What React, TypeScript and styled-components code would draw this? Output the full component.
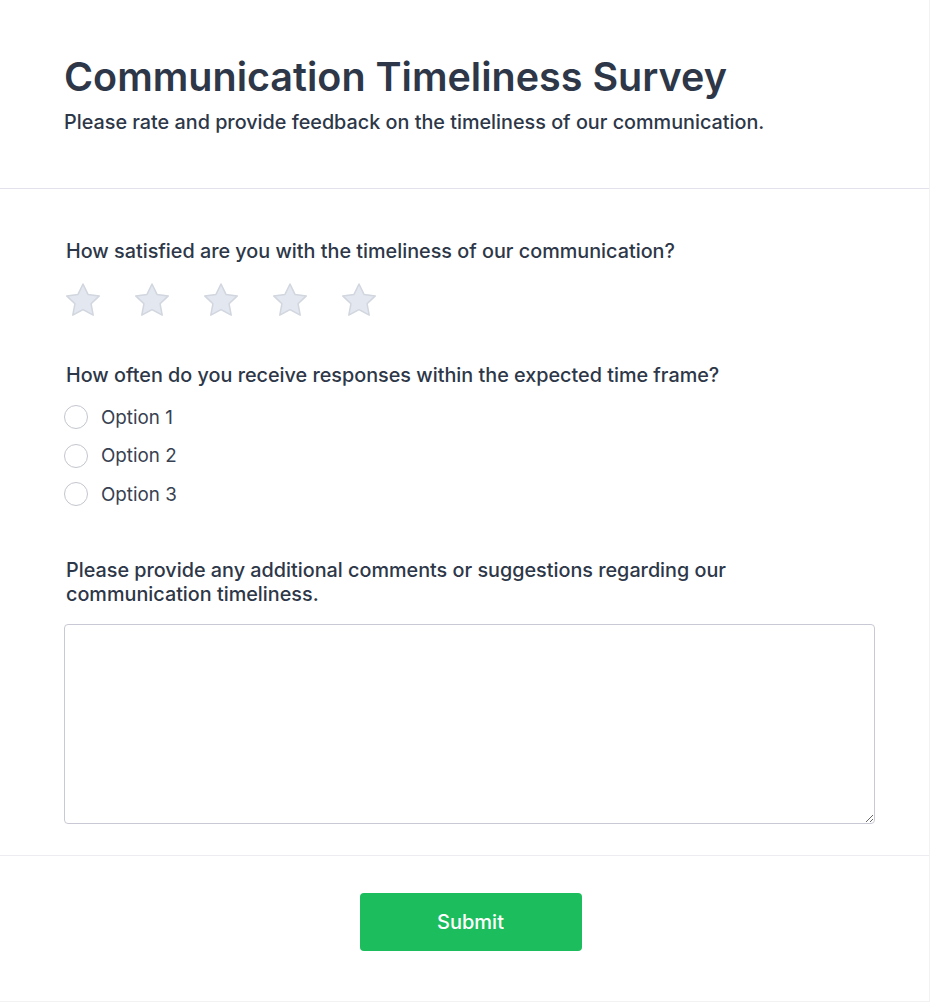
import styled, { createGlobalStyle } from 'styled-components';

const GlobalStyle = createGlobalStyle`
  body {
    margin: 0;
    background: #ffffff;
    font-family: Inter, "Noto Sans", "Liberation Sans", sans-serif;
    color: #2d3748;
  }
`;

const Card = styled.div`
  width: 929px;
  min-height: 1001px;
  border-right: 1px solid #f2f2f5;
  border-bottom: 1px solid #f2f2f5;
  background: #ffffff;
  display: flex;
  flex-direction: column;
`;

const Header = styled.header`
  padding: 53px 64px 54px 64px;
  border-bottom: 1px solid #e2e1ec;
`;

const Title = styled.h1`
  margin: 0;
  font-size: 39.5px;
  line-height: 48px;
  font-weight: 600;
  color: #2d3748;
`;

const Subtitle = styled.p`
  margin: 9px 0 0;
  font-size: 19.8px;
  line-height: 24px;
  font-weight: 500;
  color: #2d3748;
`;

const Body = styled.section`
  padding: 50px 54px 31px 64px;
  display: flex;
  flex-direction: column;
`;

const Question = styled.div<{ $gap: number }>`
  margin-bottom: ${(p) => p.$gap}px;
`;

const Label = styled.div<{ $maxWidth?: number }>`
  margin-left: 2px;
  font-size: 19.8px;
  line-height: 24px;
  font-weight: 500;
  color: #2d3748;
  max-width: ${(p) => (p.$maxWidth ? `${p.$maxWidth}px` : 'none')};
`;

const Stars = styled.div`
  display: flex;
  gap: 31px;
  margin-top: 19px;
`;

const StarButton = styled.button`
  border: none;
  background: none;
  padding: 0;
  width: 38px;
  height: 36px;
  cursor: pointer;
  display: block;
`;

const Options = styled.div`
  display: flex;
  flex-direction: column;
  gap: 14.5px;
  margin-top: 18.5px;
`;

const OptionRow = styled.label`
  display: flex;
  align-items: center;
  gap: 13px;
  height: 24px;
  font-size: 18.8px;
  color: #374151;
  cursor: pointer;
`;

const Radio = styled.span`
  width: 24px;
  height: 24px;
  box-sizing: border-box;
  border: 1.5px solid #c3c6ce;
  border-radius: 50%;
  background: #ffffff;
`;

const Comments = styled.textarea`
  display: block;
  margin-top: 18px;
  width: 100%;
  height: 200px;
  box-sizing: border-box;
  border: 1px solid #c9c9d6;
  border-radius: 4px;
  padding: 10px 12px;
  font-family: inherit;
  font-size: 16px;
  resize: vertical;
  outline: none;
`;

const Footer = styled.footer`
  border-top: 1px solid #ececf1;
  padding: 37px 0 50px 12px;
  display: flex;
  justify-content: center;
`;

const SubmitButton = styled.button`
  width: 222px;
  height: 58px;
  border: none;
  border-radius: 4px;
  background: #1bbd5d;
  color: #ffffff;
  font-family: inherit;
  font-size: 20px;
  font-weight: 500;
  cursor: pointer;
`;

const Star = () => (
  <svg width="38" height="36" viewBox="0 0 38 36">
    <path
      d="M19 2 L24 12.4 L35.3 13.9 L27.1 21.8 L29.2 33.2 L19 27.7 L8.8 33.2 L10.9 21.8 L2.7 13.9 L14 12.4 Z"
      fill="#e3e7ef"
      stroke="#d1d6df"
      strokeWidth="1.5"
      strokeLinejoin="round"
    />
  </svg>
);

export default function App() {
  return (
    <>
      <GlobalStyle />
      <Card>
        <Header>
          <Title>Communication Timeliness Survey</Title>
          <Subtitle>Please rate and provide feedback on the timeliness of our communication.</Subtitle>
        </Header>
        <Body>
          <Question $gap={44.5}>
            <Label>How satisfied are you with the timeliness of our communication?</Label>
            <Stars>
              {[1, 2, 3, 4, 5].map((n) => (
                <StarButton key={n} type="button" aria-label={`${n} star`}>
                  <Star />
                </StarButton>
              ))}
            </Stars>
          </Question>
          <Question $gap={52}>
            <Label>How often do you receive responses within the expected time frame?</Label>
            <Options>
              {['Option 1', 'Option 2', 'Option 3'].map((o) => (
                <OptionRow key={o}>
                  <Radio />
                  {o}
                </OptionRow>
              ))}
            </Options>
          </Question>
          <Question $gap={0}>
            <Label $maxWidth={700}>
              Please provide any additional comments or suggestions regarding our communication timeliness.
            </Label>
            <Comments />
          </Question>
        </Body>
        <Footer>
          <SubmitButton type="button">Submit</SubmitButton>
        </Footer>
      </Card>
    </>
  );
}
